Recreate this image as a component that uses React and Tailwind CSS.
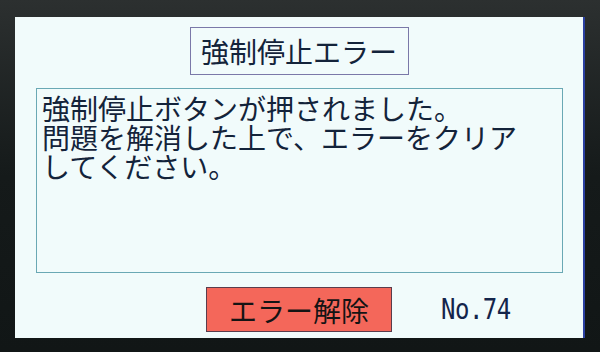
const jp = { fontFamily: '"Noto Sans CJK JP", "Noto Sans", sans-serif' };

const App = () => {
  return (
    <div className="w-[600px] h-[352px] bg-gradient-to-b from-[#2c3030] via-[#151a1a] to-[#111616] pt-[17px] pl-[15px]">
      <div
        className="w-[570px] h-[321px] bg-[#f1fbfb] border-r-2 border-[#2a3fa0] flex flex-col text-[#13233a]"
        style={jp}
      >
        <div className="mt-[10px] mx-auto w-[219px] h-[48px] border border-[#7a78a8] flex items-center justify-center text-[28px] leading-none">
          強制停止エラー
        </div>

        <div className="mt-[13px] ml-[21px] w-[527px] h-[185px] border border-[#6aa8b4] pl-[5px] pt-[5px] text-[28px] leading-[29px]">
          <p>強制停止ボタンが押されました。</p>
          <p>問題を解消した上で、エラーをクリア</p>
          <p>してください。</p>
        </div>

        <div className="mt-[14px] flex items-center">
          <div className="ml-[191px] w-[186px] h-[45px] bg-[#f4675a] border border-[#5a3c4c] flex items-center justify-center text-[28px] leading-none text-[#141414]">
            エラー解除
          </div>
          <div
            className="ml-[49px] text-[24px] leading-none tracking-[-0.5px] scale-y-[1.18] text-[#14244a]"
            style={{ fontFamily: '"DejaVu Sans Mono", "Liberation Mono", monospace' }}
          >
            No.74
          </div>
        </div>
      </div>
    </div>
  );
};

export default App;
